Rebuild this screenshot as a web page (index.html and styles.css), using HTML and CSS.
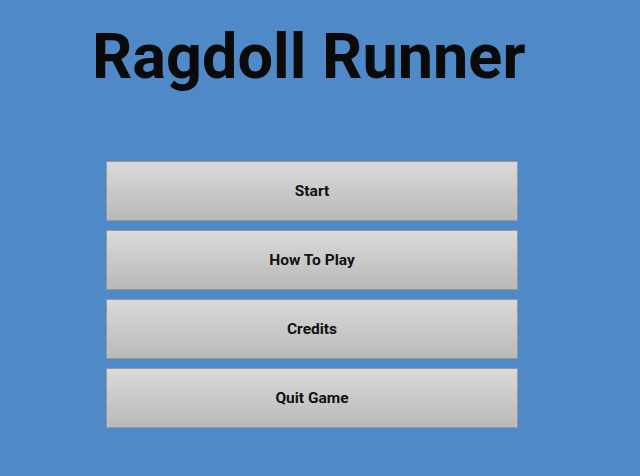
FILE: index.html
```html
<!DOCTYPE html>
<html lang="en">
<head>
    <meta charset="UTF-8">
    <meta name="viewport" content="width=device-width, initial-scale=1.0">
    <title>Ragdoll Runner</title>
    <link rel="stylesheet" href="styles.css">
</head>
<body>
    <div class="screen">
        <h1 class="title">Ragdoll Runner</h1>

        <div class="menu">
            <button class="menu-btn" id="startBtn">Start</button>
            <button class="menu-btn" id="howToBtn">How To Play</button>
            <button class="menu-btn" id="creditsBtn">Credits</button>
            <button class="menu-btn" id="quitBtn">Quit Game</button>
        </div>
    </div>
</body>
</html>
```

FILE: styles.css
```css
body { margin: 0; background: #4f89c8; font-family: Roboto, "Liberation Sans", sans-serif; }
.screen { width: 640px; height: 476px; display: flex; flex-direction: column; }
.title { margin: 22px 0 0 92px; font-size: 63px; font-weight: 700; line-height: 70px; color: #0a0a0a; letter-spacing: 0; }
.menu { display: flex; flex-direction: column; gap: 9px; margin: 69px 0 0 106px; width: 412px; }
.menu-btn { height: 60px; border: 1px solid #979797; background: linear-gradient(#dadada, #b9b9b9); font-family: Roboto, "Liberation Sans", sans-serif; font-size: 15.5px; font-weight: 700; color: #111; cursor: pointer; padding: 0; }
```
